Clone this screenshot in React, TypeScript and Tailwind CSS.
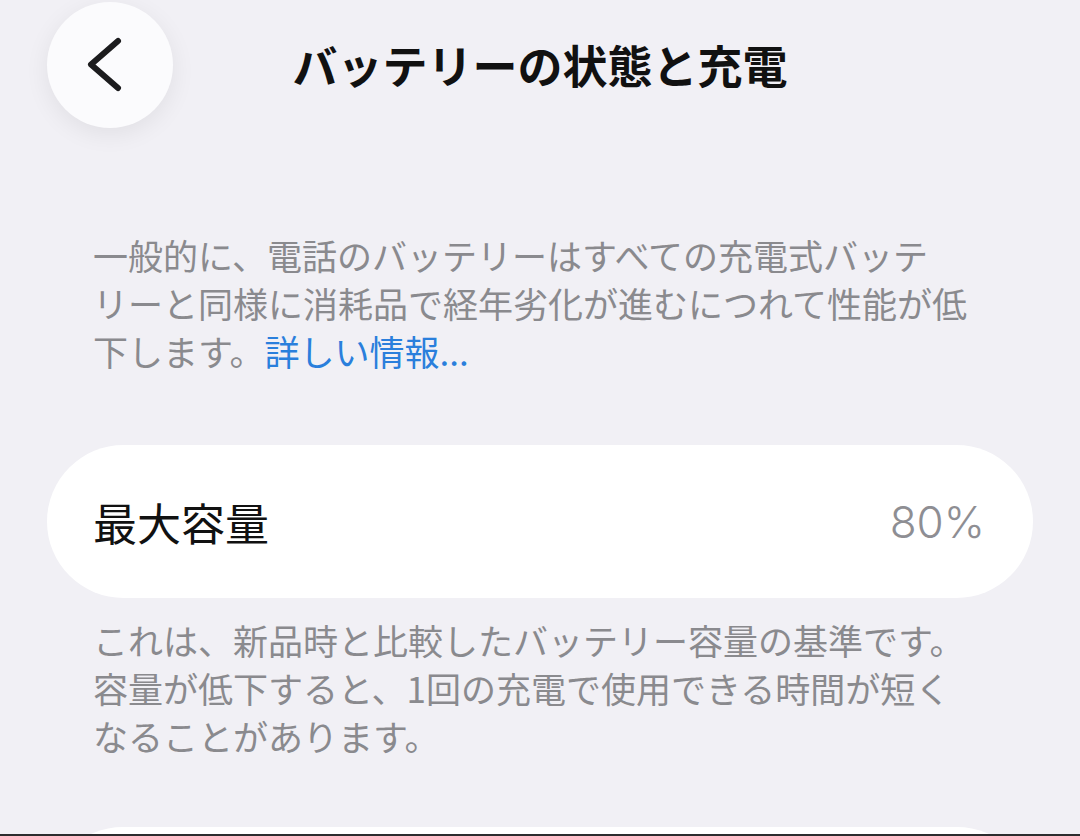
import React from "react";

const BackButton: React.FC = () => (
    <button
        className="w-[126px] h-[126px] rounded-full bg-[#fbfbfd] flex items-center justify-center shadow-[0_6px_24px_rgba(0,0,0,0.07)]"
        aria-label="Back"
    >
        <svg width="126" height="126" viewBox="0 0 126 126" fill="none">
            <path
                d="M71 39 L44 62.5 L71 86"
                stroke="#1c1c1e"
                strokeWidth="6"
                strokeLinecap="round"
                strokeLinejoin="round"
            />
        </svg>
    </button>
);

export default function App() {
    return (
        <div
            className="w-[1080px] h-[836px] bg-[#f1f0f5] flex flex-col overflow-hidden"
            style={{fontFamily: '"Noto Sans CJK JP", "Noto Sans", sans-serif'}}
        >
            <div className="flex-1 flex flex-col overflow-hidden">
                <div className="flex items-center pt-[2px] shrink-0">
                    <div className="w-[173px] pl-[47px] shrink-0">
                        <BackButton/>
                    </div>
                    <h1 className="flex-1 text-center text-[45px] font-bold text-[#111]">
                        バッテリーの状態と充電
                    </h1>
                    <div className="w-[173px] shrink-0"/>
                </div>

                <p className="mt-[103px] pl-[93px] text-[35px] leading-[48px] text-[#8a8a8e] whitespace-nowrap shrink-0">
                    一般的に、電話のバッテリーはすべての充電式バッテ<br/>
                    リーと同様に消耗品で経年劣化が進むにつれて性能が低<br/>
                    下します。<span className="text-[#2a7fdc]">詳しい情報...</span>
                </p>

                <div className="mt-[70px] mx-[47px] h-[153px] shrink-0 bg-white rounded-full flex items-center justify-between pl-[46px] pr-[48px]">
                    <span className="text-[44px] text-[#111]">最大容量</span>
                    <span className="text-[44px] text-[#8e8e93]" style={{fontFamily: '"Inter", "Noto Sans", sans-serif', fontWeight: 300}}>80%</span>
                </div>

                <p className="mt-[18px] pl-[93px] text-[35px] leading-[48px] text-[#8a8a8e] whitespace-nowrap shrink-0">
                    これは、新品時と比較したバッテリー容量の基準です。<br/>
                    容量が低下すると、1回の充電で使用できる時間が短く<br/>
                    なることがあります。
                </p>

                <div className="mt-[67px] mx-[47px] h-[153px] bg-white rounded-[76px] shrink-0"/>
            </div>
            <div className="h-[2px] bg-[#2c2c2e] shrink-0"/>
        </div>
    );
}
